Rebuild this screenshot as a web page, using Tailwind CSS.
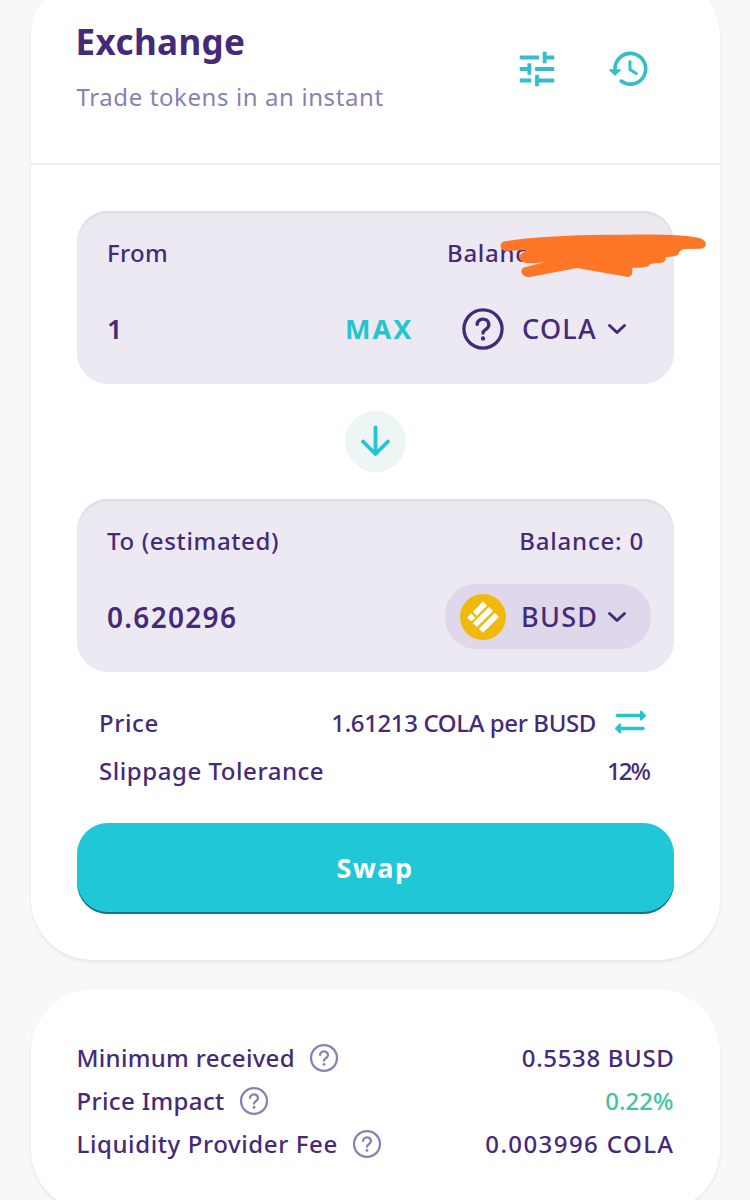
<!DOCTYPE html>
<html lang="en">
<head>
<meta charset="utf-8">
<title>Exchange</title>
<script src="https://cdn.jsdelivr.net/npm/@tailwindcss/browser@4"></script>
</head>
<body class="h-[1200px] w-[750px] overflow-hidden bg-[#f8f8f8] font-['Noto_Sans','Open_Sans',sans-serif] text-[24px] leading-[36px] font-medium text-[#452a7a] whitespace-nowrap">
<svg class="hidden">
  <symbol id="help" viewBox="0 0 24 24"><circle cx="12" cy="12" r="9.150" fill="none" stroke="currentColor" stroke-width="1.600"/><path d="M9.200 9.800a2.800 2.550 0 1 1 4.800 1.800c-.9.850-2 1.100-2 2.300" fill="none" stroke="currentColor" stroke-width="1.600" stroke-linecap="round"/><circle cx="12" cy="16.500" r="1.050" fill="currentColor"/></symbol>
  <symbol id="chev" viewBox="0 0 20 12"><path d="M2.500 2.500l7.500 7L17.500 2.500" fill="none" stroke="currentColor" stroke-width="3" stroke-linecap="round" stroke-linejoin="round"/></symbol>
</svg>
<main class="flex h-[1200px] flex-col gap-[30px] overflow-hidden pl-[30.500px]">
  <section class="-mt-[25px] h-[985px] w-[689px] shrink-0 rounded-[61px] bg-white pt-[25px] shadow-[0_2px_3px_rgba(25,19,38,0.08)]">
    <header class="flex h-[165px] justify-between border-b-2 border-[#eeeeee] pl-[46px] pr-[68px]">
      <div class="flex flex-col pt-[18px]">
        <h1 class="-ml-px h-[48px] text-[35px] leading-[48px] font-bold tracking-[0.400px]">Exchange</h1>
        <p class="mt-[13px] font-normal tracking-[0.600px] text-[#8c7fb3]">Trade tokens in an instant</p>
      </div>
      <div class="flex h-[46px] gap-[46px] pt-[46px] text-[#33bfc9]">
        <svg class="size-[46px] shrink-0" viewBox="0 0 24 24" fill="currentColor"><path d="M3 17v2h6v-2H3zM3 5v2h10V5H3zm10 16v-2h8v-2h-8v-2h-2v6h2zM7 9v2H3v2h4v2h2V9H7zm14 4v-2H11v2h10zm-6-4h2V7h4V5h-4V3h-2v6z"/></svg>
        <svg class="size-[46px] shrink-0" viewBox="0 0 24 24" fill="none" stroke="currentColor"><path d="M4.700 12A8 8 0 1 1 7.900 18.300" stroke-width="1.900" stroke-linecap="round"/><path d="M2 12.500h5.400l-2.700 2.600z" fill="currentColor" stroke-width=".7" stroke-linejoin="round"/><path d="M12.500 8.200v4.100l3.300 2.100" stroke-width="1.550" stroke-linecap="round"/></svg>
      </div>
    </header>

    <div class="px-[46px] pt-[45.500px]">
      <div class="relative h-[173px] rounded-[31px] bg-[#ede9f3] px-[30.500px] pt-[24.500px] shadow-[inset_0_3px_3px_-1px_rgba(74,74,104,0.1)]">
        <div class="flex justify-between">
          <span class="tracking-[0.300px]">From</span>
          <span class="w-[196px] tracking-[0.700px]">Balance:</span>
        </div>
        <div class="mt-[25px] flex h-[66px] items-center text-[27px]">
          <span class="w-[238px] shrink-0 font-semibold">1</span>
          <span class="w-[113px] shrink-0 font-bold tracking-[2px] text-[#25c4cf]">MAX</span>
          <svg class="size-[50px] shrink-0"><use href="#help"/></svg>
          <span class="ml-[14px] w-[78px] shrink-0 tracking-[1.300px]">COLA</span>
          <svg class="ml-[7px] h-[12px] w-[20px] shrink-0"><use href="#chev"/></svg>
        </div>
        <svg class="absolute left-[423px] top-[20px] h-[50px] w-[210px]" viewBox="500 231 210 50" fill="#ff7626"><path d="M503.500 241.500C540 236 580 234.800 625 234.800C660 234 690 235 701 238.500C709 242 706 249 700 248.700L684 249Q678 251 679 254Q676 257 666 257Q666 264 657 263L650 264Q650 267 641 267.500L632 268Q634 276 628 277L577 268L530 277C521 278 518 268 526 267L545 262Q526 265 521 261Q517 257 522 253L528 250L504 251Q497 246 503.500 241.500Z"/></svg>
      </div>

      <div class="flex h-[115px] items-center justify-center">
        <div class="flex size-[61px] items-center justify-center rounded-full bg-[#edf5f5] text-[#25c4cf]">
          <svg class="size-[32px]" viewBox="0 0 32 32" fill="none" stroke="currentColor" stroke-width="3.800" stroke-linecap="round" stroke-linejoin="round"><path d="M16.500 2.500V29M4 16.500L16.500 29l12.500-12.500"/></svg>
        </div>
      </div>

      <div class="h-[173px] rounded-[31px] bg-[#ede9f3] px-[30.500px] pt-[24.500px] shadow-[inset_0_3px_3px_-1px_rgba(74,74,104,0.1)]">
        <div class="flex justify-between">
          <span class="tracking-[0.650px]">To (estimated)</span>
          <span class="-mr-px tracking-[0.800px]">Balance: 0</span>
        </div>
        <div class="mt-[24.500px] flex h-[66px] items-center text-[27px]">
          <span class="w-[338px] shrink-0 text-[28px] font-semibold tracking-[1.300px]">0.620296</span>
          <div class="flex h-[65px] w-[206px] shrink-0 items-center rounded-[31px] bg-[#dfd8ea] pl-[15px]">
            <svg class="size-[46px] shrink-0" viewBox="0 0 46 46"><circle cx="23" cy="23" r="23" fill="#f0b90b"/><path fill="#fff" d="M23 7.500l4.100 4.100-10.200 10.200-4.100-4.100zM28.900 12.900l4.100 4.100-16.100 16.100-4.100-4.100zM11.200 19.400l4.100 4.100-4.100 4.100-4.100-4.100zM34.800 18.800l4.100 4.100L23 38.800l-4.100-4.100z"/></svg>
            <span class="ml-[15px] w-[79px] tracking-[1.300px]">BUSD</span>
            <svg class="ml-[7px] h-[12px] w-[20px]"><use href="#chev"/></svg>
          </div>
        </div>
      </div>

      <div class="flex h-[151px] flex-col gap-[12px] px-[22.500px] pt-[33.500px]">
        <div class="flex items-center">
          <span class="tracking-[0.600px]">Price</span>
          <span class="ml-auto tracking-[-0.380px]">1.61213 COLA per BUSD</span>
          <svg class="ml-[18px] mr-[4px] h-[26px] w-[33px] -translate-y-[2px] text-[#25c4cf]" viewBox="0 0 33 26" fill="none" stroke="currentColor" stroke-width="3.600" stroke-linecap="round" stroke-linejoin="round"><path d="M3.500 7.500H28M5 20.500h24"/><path d="M27 3.500l4 4-4 4zM6 16.500l-4 4 4 4z" fill="currentColor" stroke-width="2"/></svg>
        </div>
        <div class="flex justify-between"><span class="tracking-[0.550px]">Slippage Tolerance</span><span class="mr-[2px] tracking-[-2px]">12%</span></div>
      </div>

      <button class="block h-[91px] w-full rounded-[31px] bg-[#20c7d6] text-[27px] font-bold tracking-[1.500px] text-white shadow-[inset_0_-2px_0_rgba(14,14,44,0.45)]">Swap</button>
    </div>
  </section>

  <section class="h-[221px] w-[689px] shrink-0 rounded-[61px] bg-white px-[46px] pt-[46px] leading-[43px] shadow-[0_2px_3px_rgba(25,19,38,0.08)]">
    <div class="flex h-[43px] items-center"><span class="tracking-[0.300px]">Minimum received</span><svg class="ml-[12px] size-[34px] text-[#8c7fb3]"><use href="#help"/></svg><span class="-mr-px ml-auto tracking-[0.650px]">0.5538 BUSD</span></div>
    <div class="flex h-[43px] items-center"><span class="tracking-[0.350px]">Price Impact</span><svg class="ml-[12px] size-[34px] text-[#8c7fb3]"><use href="#help"/></svg><span class="ml-auto text-[#3fc5a0]">0.22%</span></div>
    <div class="flex h-[43px] items-center"><span class="tracking-[0.600px]">Liquidity Provider Fee</span><svg class="ml-[12px] size-[34px] text-[#8c7fb3]"><use href="#help"/></svg><span class="-mr-px ml-auto tracking-[1.400px]">0.003996 COLA</span></div>
  </section>
</main>
</body>
</html>
